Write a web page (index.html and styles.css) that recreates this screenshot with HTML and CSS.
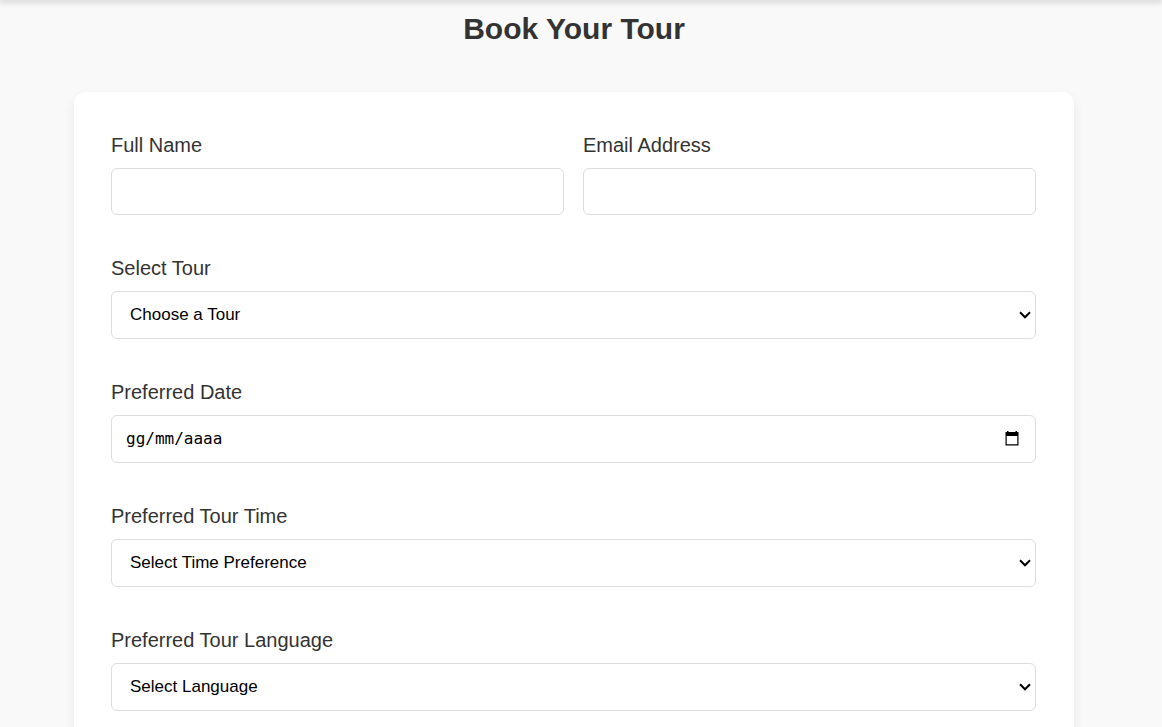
FILE: index.html
```html
<!DOCTYPE html>
<html lang="en">
<head>
<meta charset="utf-8">
<title>Book Your Tour</title>
<link rel="stylesheet" href="styles.css">
</head>
<body>
<header class="topbar"></header>
<main class="booking">
  <h1 class="booking-title">Book Your Tour</h1>
  <form class="card">
    <div class="row">
      <div class="group">
        <label for="name">Full Name</label>
        <input class="field field-short" type="text" id="name">
      </div>
      <div class="group">
        <label for="email">Email Address</label>
        <input class="field field-short" type="email" id="email">
      </div>
    </div>
    <div class="group">
      <label for="tour">Select Tour</label>
      <div class="control">
        <select class="field field-select" id="tour"><option>Choose a Tour</option></select>
        <svg class="chevron" width="12" height="8" viewBox="0 0 12 8"><path d="M1 1.300l5 5 5-5" fill="none" stroke="#000" stroke-width="2"/></svg>
      </div>
    </div>
    <div class="group">
      <label for="date">Preferred Date</label>
      <div class="control">
        <input class="field field-date" type="text" id="date" placeholder="gg/mm/aaaa">
        <button class="date-button" type="button" aria-label="Open calendar">
          <svg width="14" height="15" viewBox="0 0 14 15"><path d="M2 0h1.500v1h7V0H12v1h1.500v13.500H.5V1H2zM1.700 5v8.300h10.600V5z" fill="#000" fill-rule="evenodd"/></svg>
        </button>
      </div>
    </div>
    <div class="group">
      <label for="time">Preferred Tour Time</label>
      <div class="control">
        <select class="field field-select" id="time"><option>Select Time Preference</option></select>
        <svg class="chevron" width="12" height="8" viewBox="0 0 12 8"><path d="M1 1.300l5 5 5-5" fill="none" stroke="#000" stroke-width="2"/></svg>
      </div>
    </div>
    <div class="group">
      <label for="language">Preferred Tour Language</label>
      <div class="control">
        <select class="field field-select" id="language"><option>Select Language</option></select>
        <svg class="chevron" width="12" height="8" viewBox="0 0 12 8"><path d="M1 1.300l5 5 5-5" fill="none" stroke="#000" stroke-width="2"/></svg>
      </div>
    </div>
  </form>
</main>
</body>
</html>
```
FILE: styles.css
```css
* {
  box-sizing: border-box;
}

body {
  margin: 0;
  height: 100vh;
  overflow: hidden;
  background: #f9f9f9;
  color: #333;
  font-family: Arial, "Liberation Sans", sans-serif;
}

.topbar {
  height: 0;
  box-shadow: 0 0 6px 2px rgba(0, 0, 0, 0.2);
}

.booking {
  padding: 11px 14px 40px 0;
}

.booking-title {
  margin: 0 0 45px;
  font-size: 30px;
  line-height: 36px;
  text-align: center;
}

.card {
  display: flex;
  flex-direction: column;
  gap: 38px;
  max-width: 1000px;
  margin: 0 auto;
  padding: 38px 38px 38px 37px;
  border-radius: 12px;
  background: #fff;
  box-shadow: 0 5px 12px rgba(0, 0, 0, 0.07);
}

.row {
  display: grid;
  grid-template-columns: 1fr 1fr;
  gap: 19px;
}

.group {
  display: flex;
  flex-direction: column;
  gap: 8px;
}

label {
  font-size: 20px;
  line-height: 30px;
}

.control {
  display: flex;
  position: relative;
}

.field {
  width: 100%;
  height: 48px;
  padding: 0 14px;
  border: 1px solid #ddd;
  border-radius: 6px;
  background: #fff;
  color: #000;
  font-family: Arial, "Liberation Sans", sans-serif;
  font-size: 16px;
}

.field-short {
  height: 47px;
}

.field-select {
  appearance: none;
  padding: 0 32px 2px 18px;
  font-size: 17px;
}

.chevron {
  position: absolute;
  top: 20px;
  right: 5px;
  pointer-events: none;
}

.field-date {
  padding-bottom: 2px;
  font-family: "DejaVu Sans Mono", monospace;
}

.field-date::placeholder {
  color: #000;
  opacity: 1;
}

.date-button {
  position: absolute;
  top: 0;
  right: 13px;
  bottom: 0;
  display: flex;
  align-items: center;
  padding: 0 4px 2px;
  border: 0;
  background: none;
}
```
